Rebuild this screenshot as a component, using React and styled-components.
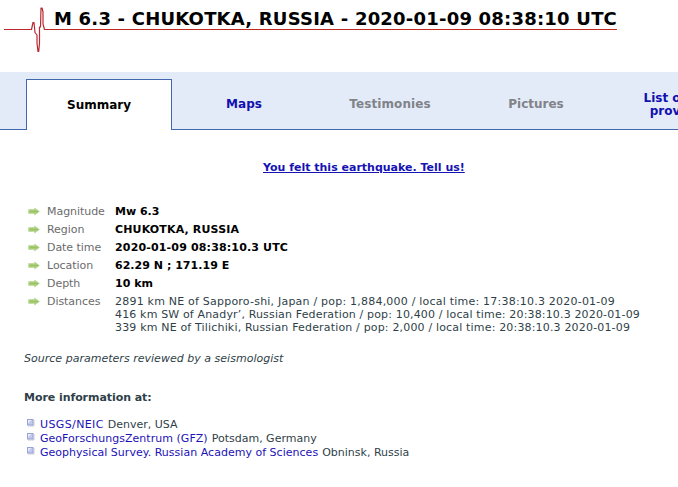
import React from 'react';
import styled, { createGlobalStyle } from 'styled-components';

const GlobalStyle = createGlobalStyle`
  * { box-sizing: border-box; }
  body {
    margin: 0;
    background: #fff;
    font: 11px/13px Verdana, "DejaVu Sans", sans-serif;
    color: #2f3f49;
    overflow: hidden;
  }
`;

const Page = styled.main`
  width: 678px;
  height: 487px;
  overflow: hidden;
`;

const Header = styled.header`
  display: flex;
  height: 72px;
  padding-left: 4px;
`;

const Pulse = styled.svg`
  width: 44px;
  height: 60px;
  flex: none;
`;

const Title = styled.h1`
  margin: 0;
  width: 569px;
  height: 30px;
  padding: 7px 0 0 6px;
  border-bottom: 1px solid #c0281e;
  font-size: 18px;
  line-height: 24px;
  letter-spacing: 0.21px;
  white-space: nowrap;
  color: #000;
`;

const Tabs = styled.nav`
  display: flex;
  align-items: flex-end;
  width: 760px;
  height: 58px;
  padding-left: 26px;
  background: linear-gradient(#4068ab, #4068ab) bottom / 100% 1px no-repeat #e3ebf8;
`;

const Tab = styled.a`
  display: flex;
  align-items: center;
  justify-content: center;
  flex: none;
  width: 146px;
  height: 51px;
  padding: ${(p) => (p.$active ? '0' : '0 2px 1px 0')};
  border: 1px solid ${(p) => (p.$active ? '#4068ab' : 'transparent')};
  border-bottom: 0;
  background: ${(p) => (p.$active ? '#fff' : 'transparent')};
  color: ${(p) => p.$color};
  font-size: 12px;
  font-weight: 700;
  line-height: 13px;
  letter-spacing: ${(p) => p.$spacing || 0}px;
  text-align: center;
`;

const Invite = styled.div`
  display: flex;
  height: 72px;
  padding: 31px 0 0 263px;
`;

const InviteLink = styled.a`
  color: #1612b4;
  font-weight: 700;
  text-decoration: underline;
  white-space: nowrap;
`;

const Details = styled.dl`
  margin: 0;
  padding-left: 28px;
`;

const Row = styled.div`
  display: grid;
  grid-template-columns: 19px 68px auto;
  align-items: start;
  min-height: 18px;
  padding-top: 3px;
`;

const Arrow = styled.svg`
  width: 12px;
  height: 9px;
  margin-top: 2px;
`;

const Label = styled.dt`
  color: #6b6b6b;
  letter-spacing: -0.05px;
  white-space: nowrap;
`;

const Value = styled.dd`
  margin: 0;
  color: #000;
  font-weight: 700;
  letter-spacing: ${(p) => p.$spacing}px;
  white-space: nowrap;
`;

const Distance = styled.div`
  color: #2f3f49;
  font-weight: 400;
  letter-spacing: ${(p) => p.$spacing}px;
`;

const Note = styled.p`
  margin: 18px 0 0 24px;
  font-style: italic;
  letter-spacing: 0.02px;
`;

const Heading = styled.h2`
  margin: 26px 0 0 24px;
  font-size: 11px;
  line-height: 13px;
  letter-spacing: -0.06px;
`;

const Sources = styled.ul`
  margin: 14px 0 0;
  padding: 0 0 0 26px;
  list-style: none;
`;

const Source = styled.li`
  display: flex;
  height: 14px;
  line-height: 14px;
  white-space: nowrap;
`;

const Bullet = styled.svg`
  width: 14px;
  height: 10px;
  flex: none;
`;

const SourceLink = styled.a`
  margin-right: 4px;
  color: #1c12b8;
  letter-spacing: ${(p) => p.$spacing}px;
`;

const details = [
  ['Magnitude', 'Mw 6.3', 0],
  ['Region', 'CHUKOTKA, RUSSIA', 0.15],
  ['Date time', '2020-01-09 08:38:10.3 UTC', 0.16],
  ['Location', '62.29 N ; 171.19 E', 0.03],
  ['Depth', '10 km', 0],
];

const distances = [
  ['2891 km NE of Sapporo-shi, Japan / pop: 1,884,000 / local time: 17:38:10.3 2020-01-09', 0.215],
  ['416 km SW of Anadyr’, Russian Federation / pop: 10,400 / local time: 20:38:10.3 2020-01-09', 0.155],
  ['339 km NE of Tilichiki, Russian Federation / pop: 2,000 / local time: 20:38:10.3 2020-01-09', 0.17],
];

const sources = [
  ['USGS/NEIC', 'Denver, USA', 0.38],
  ['GeoForschungsZentrum (GFZ)', 'Potsdam, Germany', 0.03],
  ['Geophysical Survey. Russian Academy of Sciences', 'Obninsk, Russia', 0.02],
];

const ArrowIcon = () => (
  <Arrow viewBox="0 0 12 9" aria-hidden="true">
    <path d="M0.3 2.3H6.3V0.5L11.8 4.5 6.3 8.5V6.7H0.3Z" fill="#b0d285" />
    <path d="M1.5 4.5H10" stroke="#98c264" strokeWidth="1.6" />
  </Arrow>
);

const BulletIcon = () => (
  <Bullet viewBox="0 0 14 10" aria-hidden="true">
    <path d="M2 8H8V2" fill="none" stroke="#c9ccd9" strokeWidth="1" />
    <rect x="1.5" y="1.5" width="5.5" height="5.5" fill="#c0c9ef" stroke="#98a2d3" />
    <path d="M2 2H5.5L2 5.5Z" fill="#e6eafa" />
  </Bullet>
);

export default function App() {
  return (
    <Page>
      <GlobalStyle />
      <Header>
        <Pulse viewBox="4 0 44 60" aria-hidden="true">
          <path
            d="M4 29.5H31.5L33 22.5H34L35 32.5L37 35V43L38 51.5H38.7L39.5 43V27H40.5L41 8H42L43 12V24L44.5 29.5H48"
            fill="none"
            stroke="#bc2832"
            strokeWidth="1.2"
            strokeLinejoin="round"
          />
        </Pulse>
        <Title>M 6.3 - CHUKOTKA, RUSSIA - 2020-01-09 08:38:10 UTC</Title>
      </Header>
      <Tabs>
        <Tab $active $color="#000">Summary</Tab>
        <Tab $color="#1210b0">Maps</Tab>
        <Tab $color="#808388" $spacing={0.1}>Testimonies</Tab>
        <Tab $color="#808388">Pictures</Tab>
        <Tab $color="#1210b0">List of data<br />providers</Tab>
      </Tabs>
      <Invite>
        <InviteLink>You felt this earthquake. Tell us!</InviteLink>
      </Invite>
      <Details>
        {details.map(([label, value, spacing]) => (
          <Row key={label}>
            <ArrowIcon />
            <Label>{label}</Label>
            <Value $spacing={spacing}>{value}</Value>
          </Row>
        ))}
        <Row>
          <ArrowIcon />
          <Label>Distances</Label>
          <Value>
            {distances.map(([text, spacing]) => (
              <Distance key={text} $spacing={spacing}>{text}</Distance>
            ))}
          </Value>
        </Row>
      </Details>
      <Note>Source parameters reviewed by a seismologist</Note>
      <Heading>More information at:</Heading>
      <Sources>
        {sources.map(([name, place, spacing]) => (
          <Source key={name}>
            <BulletIcon />
            <SourceLink $spacing={spacing}>{name}</SourceLink>
            {place}
          </Source>
        ))}
      </Sources>
    </Page>
  );
}
